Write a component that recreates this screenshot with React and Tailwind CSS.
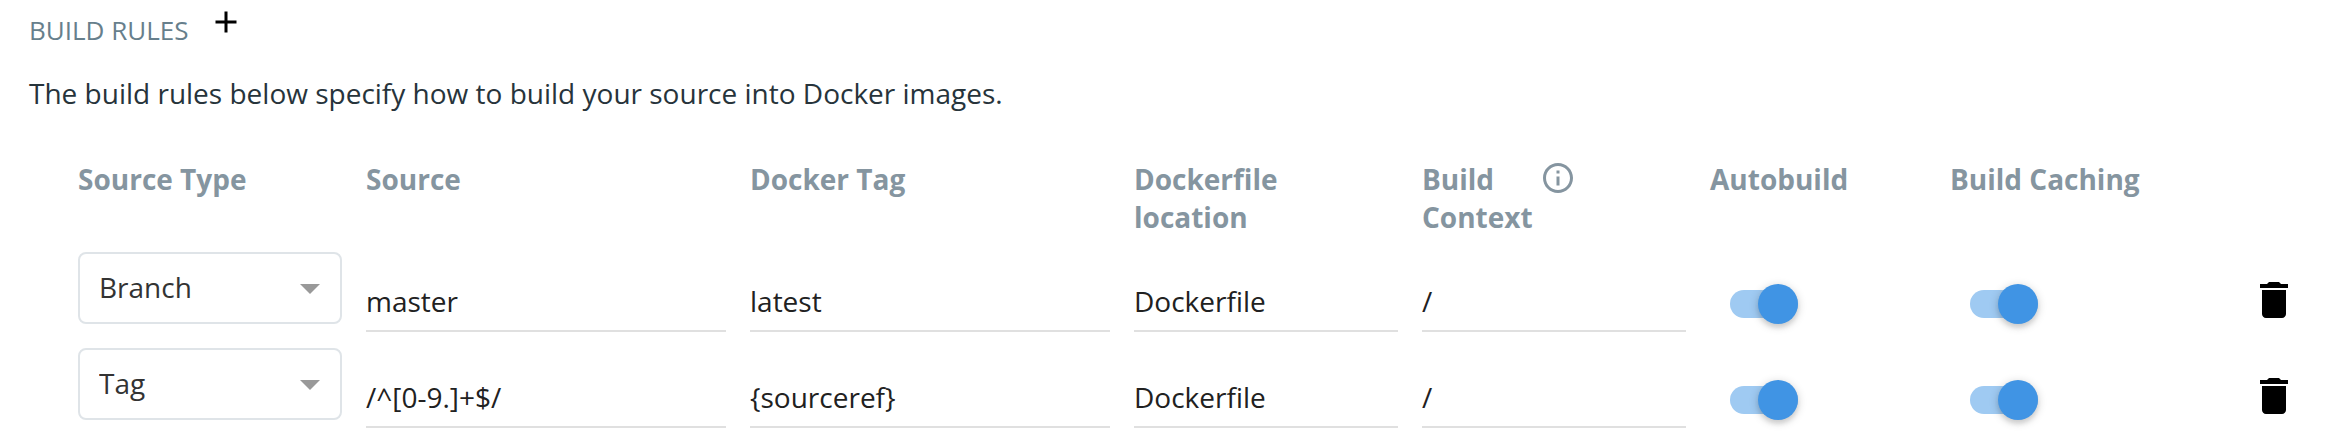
import { useState } from "react";

const initialRules = [
  { type: "Branch", source: "master", tag: "latest", dockerfile: "Dockerfile", context: "/", autobuild: true, caching: true },
  { type: "Tag", source: "/^[0-9.]+$/", tag: "{sourceref}", dockerfile: "Dockerfile", context: "/", autobuild: true, caching: true },
];

function Icon({ d, className }) {
  return (
    <svg viewBox="0 0 24 24" fill="currentColor" aria-hidden="true" className={className}>
      <path d={d} />
    </svg>
  );
}

const addPath = "M19 13h-6v6h-2v-6H5v-2h6V5h2v6h6v2z";
const arrowPath = "M7 10l5 5 5-5z";
const infoPath =
  "M11 17h2v-6h-2v6zm1-15C6.48 2 2 6.48 2 12s4.48 10 10 10 10-4.48 10-10S17.52 2 12 2zm0 18c-4.41 0-8-3.59-8-8s3.59-8 8-8 8 3.59 8 8-3.59 8-8 8zM11 9h2V7h-2v2z";
const deletePath = "M6 19c0 1.1.9 2 2 2h8c1.1 0 2-.9 2-2V7H6v12zM19 4h-3.500l-1-1h-5l-1 1H5v2h14V4z";

function HeaderCell({ children }) {
  return (
    <th scope="col" className="px-3 pb-1 text-left align-top font-bold">
      {children}
    </th>
  );
}

function TextCell({ label, value, onChange }) {
  return (
    <td className="px-3 pb-1 align-bottom">
      <input
        type="text"
        aria-label={label}
        value={value}
        onChange={(e) => onChange(e.target.value)}
        className="block w-full border-b-2 border-[#e0e0e0] bg-transparent pb-2.5 leading-[38px] text-[#212121] outline-none focus:border-[#4094e4]"
      />
    </td>
  );
}

function TypeSelect({ label, value, onChange }) {
  return (
    <div className="relative">
      <select
        aria-label={label}
        value={value}
        onChange={(e) => onChange(e.target.value)}
        className="block h-[72px] w-full appearance-none rounded-lg border-2 border-[#dfe4e8] bg-white pr-14 pb-0.5 pl-[19px] text-[#333333] outline-none focus:border-[#4094e4]"
      >
        <option>Branch</option>
        <option>Tag</option>
      </select>
      <Icon d={arrowPath} className="pointer-events-none absolute inset-y-0 right-2 my-auto size-12 text-[#999999]" />
    </div>
  );
}

function ToggleCell({ label, checked, onChange }) {
  return (
    <td className="px-3 pb-3 align-bottom">
      <label className="relative ml-5 flex h-10 w-[68px] cursor-pointer items-center">
        <input
          type="checkbox"
          role="switch"
          aria-label={label}
          checked={checked}
          onChange={(e) => onChange(e.target.checked)}
          className="peer absolute inset-0 cursor-pointer appearance-none"
        />
        <span className="pointer-events-none h-7 w-full rounded-full bg-[#9e9e9e] peer-checked:bg-[#9fcaf2]" />
        <span className="pointer-events-none absolute left-0 size-10 rounded-full bg-[#fafafa] shadow-[0_2px_10px_rgba(0,0,0,0.2),0_4px_4px_rgba(0,0,0,0.08)] peer-checked:right-0 peer-checked:left-auto peer-checked:bg-[#4094e4]" />
      </label>
    </td>
  );
}

export default function App() {
  const [rules, setRules] = useState(initialRules);

  const update = (index, key) => (value) =>
    setRules(rules.map((rule, i) => (i === index ? { ...rule, [key]: value } : rule)));
  const remove = (index) => setRules(rules.filter((_, i) => i !== index));
  const add = () =>
    setRules([...rules, { type: "Branch", source: "", tag: "", dockerfile: "Dockerfile", context: "/", autobuild: true, caching: true }]);

  return (
    <main className="bg-white pt-1 font-['Open_Sans',sans-serif] text-[28px] leading-[38px]">
      <header className="flex items-start gap-5 pl-[29px]">
        <h2 className="mt-2 text-[26px] leading-9 text-[#677f8c]">BUILD RULES</h2>
        <button type="button" aria-label="Add build rule" onClick={add} className="cursor-pointer text-black">
          <Icon d={addPath} className="size-9" />
        </button>
      </header>
      <p className="mt-[26px] pl-[29px] text-[#27343b]">
        The build rules below specify how to build your source into Docker images.
      </p>

      <div className="mt-12 pr-3 pl-[66px]">
        <table className="w-full table-fixed">
          <colgroup>
            <col className="w-72" />
            <col className="w-96" />
            <col className="w-96" />
            <col className="w-72" />
            <col className="w-72" />
            <col className="w-60" />
            <col className="w-60" />
            <col className="w-36" />
          </colgroup>
          <thead className="text-[#8595a0]">
            <tr>
              <HeaderCell>Source Type</HeaderCell>
              <HeaderCell>Source</HeaderCell>
              <HeaderCell>Docker Tag</HeaderCell>
              <HeaderCell>
                <span className="block w-min">Dockerfile location</span>
              </HeaderCell>
              <HeaderCell>
                <span className="flex items-start gap-[7px]">
                  <span className="w-min">Build Context</span>
                  <Icon d={infoPath} className="size-9 shrink-0" />
                </span>
              </HeaderCell>
              <HeaderCell>Autobuild</HeaderCell>
              <HeaderCell>Build Caching</HeaderCell>
              <td />
            </tr>
          </thead>
          <tbody>
            {rules.map((rule, i) => (
              <tr key={i} className="h-24">
                <td className="px-3 pt-3 align-top">
                  <TypeSelect label="Source Type" value={rule.type} onChange={update(i, "type")} />
                </td>
                <TextCell label="Source" value={rule.source} onChange={update(i, "source")} />
                <TextCell label="Docker Tag" value={rule.tag} onChange={update(i, "tag")} />
                <TextCell label="Dockerfile location" value={rule.dockerfile} onChange={update(i, "dockerfile")} />
                <TextCell label="Build Context" value={rule.context} onChange={update(i, "context")} />
                <ToggleCell label="Autobuild" checked={rule.autobuild} onChange={update(i, "autobuild")} />
                <ToggleCell label="Build Caching" checked={rule.caching} onChange={update(i, "caching")} />
                <td className="px-3 pb-3 align-bottom">
                  <button
                    type="button"
                    aria-label="Delete build rule"
                    onClick={() => remove(i)}
                    className="mr-3 ml-auto block cursor-pointer text-black"
                  >
                    <Icon d={deletePath} className="size-12" />
                  </button>
                </td>
              </tr>
            ))}
          </tbody>
        </table>
      </div>
    </main>
  );
}
